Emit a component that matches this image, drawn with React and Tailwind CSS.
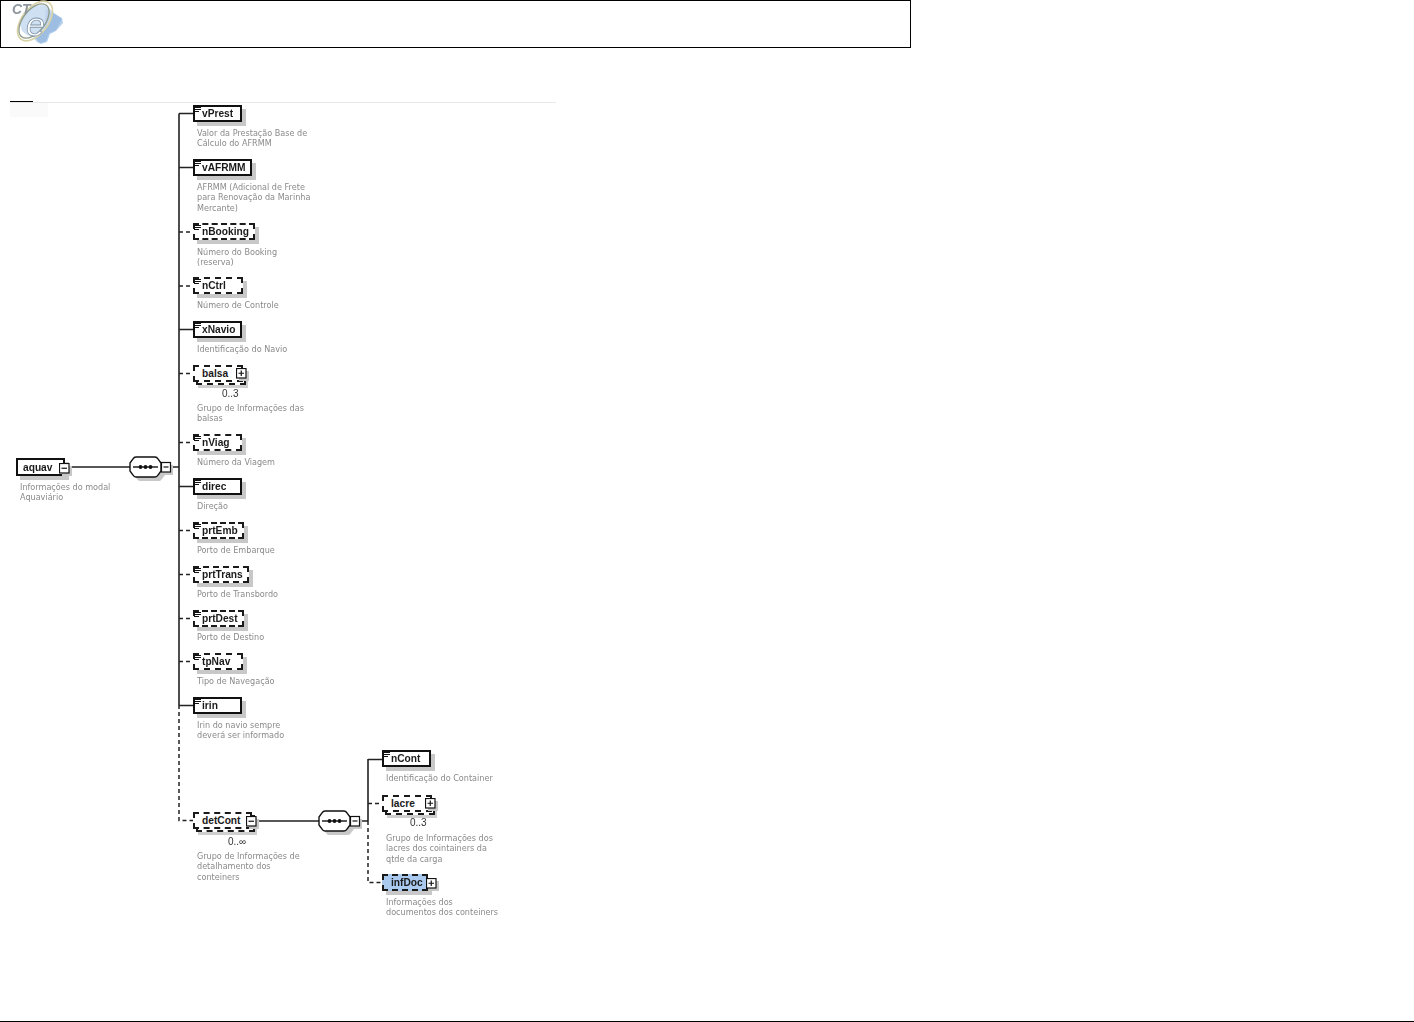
const nodes = [
  { label: "vPrest", pos: "left-[193px] top-[57px] w-[49px]", kind: "leaf" },
  { label: "vAFRMM", pos: "left-[193px] top-[111px] w-[59px]", kind: "leaf" },
  { label: "nBooking", pos: "left-[193px] top-[175px] w-[62px]", kind: "leaf", dashed: true },
  { label: "nCtrl", pos: "left-[193px] top-[229px] w-[50px]", kind: "leaf", dashed: true },
  { label: "xNavio", pos: "left-[193px] top-[273px] w-[49px]", kind: "leaf" },
  { label: "balsa", pos: "left-[193px] top-[317px] w-[50px]", kind: "plus", dashed: true, stacked: true, toggle: "left-[43px] top-[3px]" },
  { label: "nViag", pos: "left-[193px] top-[386px] w-[49px]", kind: "leaf", dashed: true },
  { label: "direc", pos: "left-[193px] top-[430px] w-[49px]", kind: "leaf" },
  { label: "prtEmb", pos: "left-[193px] top-[474px] w-[51px]", kind: "leaf", dashed: true },
  { label: "prtTrans", pos: "left-[193px] top-[518px] w-[56px]", kind: "leaf", dashed: true },
  { label: "prtDest", pos: "left-[193px] top-[562px] w-[51px]", kind: "leaf", dashed: true },
  { label: "tpNav", pos: "left-[193px] top-[605px] w-[50px]", kind: "leaf", dashed: true },
  { label: "irin", pos: "left-[193px] top-[649px] w-[49px]", kind: "leaf" },
  { label: "detCont", pos: "left-[193px] top-[764px] w-[59px]", kind: "minus", dashed: true, stacked: true, toggle: "left-[53px] top-[4px]" },
  { label: "nCont", pos: "left-[382px] top-[702px] w-[49px]", kind: "leaf" },
  { label: "lacre", pos: "left-[382px] top-[747px] w-[50px]", kind: "plus", dashed: true, stacked: true, toggle: "left-[43px] top-[3px]" },
  { label: "infDoc", pos: "left-[382px] top-[826px] w-[46px]", kind: "plus", dashed: true, blue: true, toggle: "left-[44px] top-[4px]" },
  { label: "aquav", pos: "left-[16px] top-[410px] w-[49px]", kind: "minus", toggle: "left-[43px] top-[5px]", inset: "pl-[5px]", h: "h-[18px]" },
];

const notes = [
  { pos: "left-[197px] top-[80px]", lines: ["Valor da Prestação Base de", "Cálculo do AFRMM"] },
  { pos: "left-[197px] top-[134px]", lines: ["AFRMM (Adicional de Frete", "para Renovação da Marinha", "Mercante)"] },
  { pos: "left-[197px] top-[199px]", lines: ["Número do Booking", "(reserva)"] },
  { pos: "left-[197px] top-[252px]", lines: ["Número de Controle"] },
  { pos: "left-[197px] top-[296px]", lines: ["Identificação do Navio"] },
  { pos: "left-[197px] top-[355px]", lines: ["Grupo de Informações das", "balsas"] },
  { pos: "left-[197px] top-[409px]", lines: ["Número da Viagem"] },
  { pos: "left-[197px] top-[453px]", lines: ["Direção"] },
  { pos: "left-[197px] top-[497px]", lines: ["Porto de Embarque"] },
  { pos: "left-[197px] top-[541px]", lines: ["Porto de Transbordo"] },
  { pos: "left-[197px] top-[584px]", lines: ["Porto de Destino"] },
  { pos: "left-[197px] top-[628px]", lines: ["Tipo de Navegação"] },
  { pos: "left-[197px] top-[672px]", lines: ["Irin do navio sempre", "deverá ser informado"] },
  { pos: "left-[197px] top-[803px]", lines: ["Grupo de Informações de", "detalhamento dos", "conteiners"] },
  { pos: "left-[386px] top-[725px]", lines: ["Identificação do Container"] },
  { pos: "left-[386px] top-[785px]", lines: ["Grupo de Informações dos", "lacres dos cointainers da", "qtde da carga"] },
  { pos: "left-[386px] top-[849px]", lines: ["Informações dos", "documentos dos conteiners"] },
  { pos: "left-[20px] top-[434px]", lines: ["Informações do modal", "Aquaviário"] },
];

const cards = [
  { label: "0..3", pos: "left-[222px] top-[340px]" },
  { label: "0..∞", pos: "left-[228px] top-[788px]" },
  { label: "0..3", pos: "left-[410px] top-[769px]" },
];

function Toggle({ plus, place }) {
  return (
    <svg width="13" height="13" viewBox="0 0 13 13" className={`absolute ${place} z-10`}>
      <rect x="3" y="3" width="10" height="10" fill="#c8c8c8" />
      <rect x="0.5" y="0.5" width="9.5" height="9.5" fill="#fff" stroke="#111" strokeWidth="1.2" />
      <path d={plus ? "M2.5 5.25H8M5.25 2.5V8" : "M2.5 5.25H8"} stroke="#111" strokeWidth="1.2" fill="none" />
    </svg>
  );
}

function Lines() {
  return (
    <svg width="8" height="6" viewBox="0 0 8 6" className="absolute -left-px top-0">
      <path d="M0 0.5H7M0 2.5H7M0 4.5H5" stroke="#111" strokeWidth="1" fill="none" />
    </svg>
  );
}

function Node({ n }) {
  const border = n.dashed ? "border-dashed border-[#1a1a1a]" : "border-solid border-[#111]";
  const bg = n.blue ? "bg-[#a9c9ef]" : "bg-white";
  const shadow = n.stacked ? "" : "shadow-[4px_4px_0_#c8c8c8]";
  return (
    <div className={`absolute ${n.pos} ${n.h || "h-[17px]"}`}>
      {n.stacked && (
        <div className="absolute left-[3px] top-[3px] right-[-3px] bottom-[-3px] border-2 border-dashed border-[#1a1a1a] bg-white shadow-[2px_3px_0_#cfcfcf]" />
      )}
      <div className={`absolute inset-0 flex items-center border-2 pt-[2px] ${border} ${bg} ${shadow} ${n.inset || "pl-[7px]"}`}>
        {n.kind === "leaf" && <Lines />}
        <span className="text-[10.2px] font-bold leading-none text-[#1a1a1a] font-['Liberation_Sans',sans-serif]">
          {n.label}
        </span>
      </div>
      {n.kind !== "leaf" && <Toggle plus={n.kind === "plus"} place={n.toggle} />}
    </div>
  );
}

function Sequence({ x, y }) {
  const shape = (d) =>
    `M${x + d + 6} ${y + d - 10}H${x + d + 25}Q${x + d + 27} ${y + d - 10} ${x + d + 28} ${y + d - 8}L${x + d + 31} ${y + d - 4}V${y + d + 4}L${x + d + 28} ${y + d + 8}Q${x + d + 27} ${y + d + 10} ${x + d + 25} ${y + d + 10}H${x + d + 6}Q${x + d + 4} ${y + d + 10} ${x + d + 3} ${y + d + 8}L${x + d} ${y + d + 4}V${y + d - 4}L${x + d + 3} ${y + d - 8}Q${x + d + 4} ${y + d - 10} ${x + d + 6} ${y + d - 10}Z`;
  return (
    <g>
      <path d={shape(4)} fill="#c8c8c8" />
      <path d={shape(0)} fill="#fff" stroke="#111" strokeWidth="1.4" />
      <path d={`M${x + 3} ${y}H${x + 28}`} stroke="#111" strokeWidth="1.4" />
      <circle cx={x + 10.5} cy={y} r="1.9" fill="#111" />
      <circle cx={x + 15.5} cy={y} r="1.9" fill="#111" />
      <circle cx={x + 20.5} cy={y} r="1.9" fill="#111" />
      <rect x={x + 33} y={y - 2} width="10" height="10" fill="#c8c8c8" />
      <rect x={x + 31.5} y={y - 4.5} width="9" height="9.5" fill="#fff" stroke="#111" strokeWidth="1.2" />
      <path d={`M${x + 33.5} ${y}H${x + 38.5}`} stroke="#111" strokeWidth="1.2" />
    </g>
  );
}

function Connectors() {
  const solid = "M179 113.5V705M179 113.5H193M179 167.5H193M179 329.5H193M179 486.5H193M179 705.5H193M65 467H130M171 467H179M256 821H319M359 821H368M368 759V821M368 759.5H382";
  const dashed = "M179 705V820.5H193M179 232H193M179 286H193M179 373.5H193M179 442.5H193M179 530.5H193M179 574.5H193M179 618.5H193M179 661.5H193M368 821V882.5H382M368 803.5H382";
  return (
    <svg className="absolute left-0 top-0" width="560" height="900" viewBox="0 48 560 900">
      <path d={solid} stroke="#222" strokeWidth="1.6" fill="none" />
      <path d={dashed} stroke="#222" strokeWidth="1.5" strokeDasharray="4 3" fill="none" />
      <Sequence x={130} y={467} />
      <Sequence x={319} y={821} />
    </svg>
  );
}

function Logo() {
  return (
    <svg width="66" height="46" viewBox="0 0 66 46" className="absolute -left-px -top-px">
      <path d="M24 12 L33 6 L44 5 L50 9 L55 14 L62 18 L63 23 L56 31 L50 34 L47 42 L41 44 L37 42 L33 37 L27 35 L22 31 L20 24 Z" fill="#b4cfec" />
      <path d="M46 9 L55 14 L62 19 L56 30 L49 33 L46 41 L40 43 L36 38 L44 30 Z" fill="#9dbde2" />
      <ellipse cx="35" cy="21" rx="23" ry="13" transform="rotate(-52 35 21)" fill="#ffffff" fillOpacity="0.35" stroke="#d9d2a4" strokeWidth="1.6" />
      <ellipse cx="34" cy="21" rx="20" ry="11" transform="rotate(-52 34 21)" fill="none" stroke="#8d9a8c" strokeWidth="1.3" />
      <text x="26" y="36" fontSize="34" fontStyle="italic" fill="#ffffff" stroke="#7f95ab" strokeWidth="0.8" fontFamily="'Liberation Sans', sans-serif">e</text>
      <text x="12" y="14" fontSize="14" fontWeight="bold" fontStyle="italic" fill="#8f979e" fontFamily="'Liberation Sans', sans-serif">CT</text>
    </svg>
  );
}

export default function App() {
  return (
    <div className="flex h-[1022px] w-full flex-col bg-white font-['DejaVu_Sans',sans-serif]">
      <header className="relative h-[48px] w-[911px] shrink-0 border border-black">
        <div className="blur-[0.5px]">
          <Logo />
        </div>
      </header>
      <main className="relative flex-1">
        <div className="absolute left-[10px] top-[53px] h-[2px] w-[23px] bg-black" />
        <div className="absolute left-[10px] top-[54px] h-px w-[546px] bg-[#e8e8e8]" />
        <div className="absolute left-[10px] top-[55px] h-[14px] w-[38px] bg-[#fafafa]" />
        <div className="absolute inset-0 blur-[0.3px]">
          <Connectors />
          {nodes.map((n) => (
            <Node key={n.label} n={n} />
          ))}
          {notes.map((t) => (
            <div key={t.lines[0]} className={`absolute ${t.pos} whitespace-nowrap text-[8.1px] leading-[10.4px] text-[#8a8a8a] blur-[0.2px]`}>
              {t.lines.map((l) => (
                <div key={l}>{l}</div>
              ))}
            </div>
          ))}
          {cards.map((c) => (
            <div key={c.pos} className={`absolute ${c.pos} text-[10px] leading-[12px] text-[#333] font-['Liberation_Sans',sans-serif]`}>
              {c.label}
            </div>
          ))}
        </div>
      </main>
      <footer className="h-px w-full shrink-0 bg-black" />
    </div>
  );
}
